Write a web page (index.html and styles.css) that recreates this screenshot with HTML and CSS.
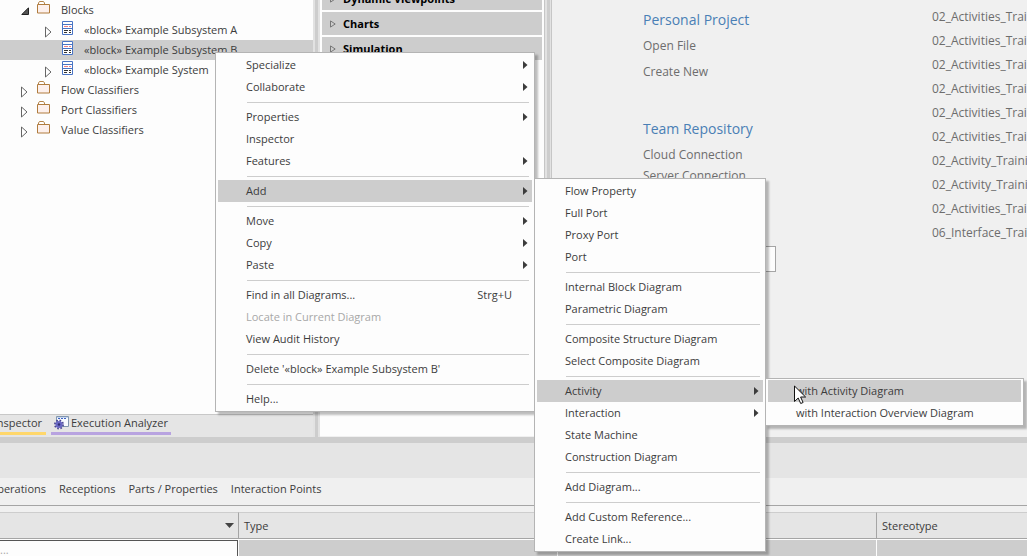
FILE: index.html
```html
<!DOCTYPE html>
<html lang="en">
<head>
<meta charset="utf-8">
<title>Project Browser</title>
<link rel="stylesheet" href="styles.css">
</head>
<body>
<svg class="defs" aria-hidden="true">
  <symbol id="folder" viewBox="0 0 14 13"><path d="M1.500 3V2l1-1.500h4l1 1.500v1" fill="#fff" stroke="#b5854b"/><path d="M.5 3.500h12v8.500H.5z" fill="#fdf0ec" stroke="#b07c3e"/></symbol>
  <symbol id="block" viewBox="0 0 12 15"><path d="M.5.5h10v13H.5z" fill="#fff" stroke="#4a74c4"/><path d="M0 3.500h11M0 7.500h11" stroke="#4a74c4"/><path d="M2 5.500h4M7 5.500h2" stroke="#ea7f86"/><path d="M2 9.500h4M7 9.500h2M2 11.500h3M7 11.500h2" stroke="#333"/></symbol>
  <symbol id="closed" viewBox="0 0 7 12"><path d="M.5 1v10L6 6z" fill="#fff" stroke="#666"/></symbol>
  <symbol id="open" viewBox="0 0 8 8"><path d="M7.500.8v6.700H.8z" fill="#555" stroke="#222"/></symbol>
  <symbol id="tri" viewBox="0 0 6 8"><path d="M.5.9v6.200L5.200 4z" fill="none" stroke="#777"/></symbol>
  <symbol id="sub" viewBox="0 0 5 8"><path d="M0 0l4.500 4L0 8z" fill="#3c3c3c"/></symbol>
</svg>
<div class="app">
  <main class="workspace">
    <section class="browser">
      <ul class="tree">
        <li><button class="node"><span class="twist"><svg class="i-open"><use href="#open"/></svg></span><span class="pic"><svg class="i-folder"><use href="#folder"/></svg></span>Blocks</button></li>
        <li><button class="node child"><span class="twist"><svg class="i-closed"><use href="#closed"/></svg></span><span class="pic"><svg class="i-block"><use href="#block"/></svg></span>«block» Example Subsystem A</button></li>
        <li><button class="node child selected"><span class="twist"></span><span class="pic"><svg class="i-block"><use href="#block"/></svg></span>«block» Example Subsystem B</button></li>
        <li><button class="node child"><span class="twist"><svg class="i-closed"><use href="#closed"/></svg></span><span class="pic"><svg class="i-block"><use href="#block"/></svg></span>«block» Example System</button></li>
        <li><button class="node"><span class="twist"><svg class="i-closed"><use href="#closed"/></svg></span><span class="pic"><svg class="i-folder"><use href="#folder"/></svg></span>Flow Classifiers</button></li>
        <li><button class="node"><span class="twist"><svg class="i-closed"><use href="#closed"/></svg></span><span class="pic"><svg class="i-folder"><use href="#folder"/></svg></span>Port Classifiers</button></li>
        <li><button class="node"><span class="twist"><svg class="i-closed"><use href="#closed"/></svg></span><span class="pic"><svg class="i-folder"><use href="#folder"/></svg></span>Value Classifiers</button></li>
      </ul>
      <div class="dock">
        <button class="dock-tab inspector"><span>Inspector</span></button>
        <button class="dock-tab analyzer">
          <svg class="i-gear" viewBox="0 0 16 14"><path d="M2.500.5h12v10h-12z" fill="#f8fbff" stroke="#8296ae"/><path d="M3 1.500h11" stroke="#c5d6ee"/><path d="M4 2.500h9" stroke="#3f62c4" stroke-dasharray="2 1"/><circle cx="5" cy="8.500" r="4" fill="none" stroke="#4a4690" stroke-width="2" stroke-dasharray="1.600 1.540"/><circle cx="5" cy="8.500" r="3.500" fill="#6a68c4"/><circle cx="5" cy="8.500" r="1.200" fill="#302f73"/></svg>
          <span>Execution Analyzer</span></button>
      </div>
    </section>
    <div class="splitter left"></div>
    <section class="toolbox">
      <button class="group"><svg class="i-tri"><use href="#tri"/></svg>Dynamic Viewpoints</button>
      <button class="group"><svg class="i-tri"><use href="#tri"/></svg>Charts</button>
      <button class="group"><svg class="i-tri"><use href="#tri"/></svg>Simulation</button>
    </section>
    <div class="splitter right"></div>
    <section class="start">
      <div class="start-links">
        <h2>Personal Project</h2>
        <a href="#">Open File</a>
        <a href="#">Create New</a>
        <h2>Team Repository</h2>
        <a href="#" class="tight">Cloud Connection</a>
        <a href="#" class="tight">Server Connection</a>
        <input class="search" type="text" aria-label="Search">
      </div>
      <div class="recent">
        <a href="#">02_Activities_Training</a>
        <a href="#">02_Activities_Training</a>
        <a href="#">02_Activities_Training</a>
        <a href="#">02_Activities_Training</a>
        <a href="#">02_Activities_Training</a>
        <a href="#">02_Activities_Training</a>
        <a href="#">02_Activity_Training</a>
        <a href="#">02_Activity_Training</a>
        <a href="#">02_Activities_Training</a>
        <a href="#">06_Interface_Training</a>
      </div>
    </section>
  </main>
  <section class="features">
    <div class="caption"></div>
    <nav class="tabs">
      <button class="cut"><span>Operations</span></button>
      <button>Receptions</button>
      <button>Parts / Properties</button>
      <button>Interaction Points</button>
    </nav>
    <table class="grid">
      <colgroup><col class="c-name"><col class="c-type"><col class="c-mid"><col></colgroup>
      <thead><tr><th class="sorted"><svg class="i-down" viewBox="0 0 9 5"><path d="M0 0h9L4.500 5z" fill="#444"/></svg></th><th>Type</th><th></th><th>Stereotype</th></tr></thead>
      <tbody><tr><td class="edit"><input type="text" placeholder="..." aria-label="New part name"></td><td></td><td></td><td></td></tr></tbody>
    </table>
  </section>
</div>

<div class="menu context" role="menu">
  <button>Specialize<svg><use href="#sub"/></svg></button>
  <button>Collaborate<svg><use href="#sub"/></svg></button>
  <hr>
  <button>Properties<svg><use href="#sub"/></svg></button>
  <button>Inspector</button>
  <button>Features<svg><use href="#sub"/></svg></button>
  <hr>
  <button class="active">Add<svg><use href="#sub"/></svg></button>
  <hr>
  <button>Move<svg><use href="#sub"/></svg></button>
  <button>Copy<svg><use href="#sub"/></svg></button>
  <button>Paste<svg><use href="#sub"/></svg></button>
  <hr>
  <button>Find in all Diagrams...<kbd>Strg+U</kbd></button>
  <button disabled>Locate in Current Diagram</button>
  <button>View Audit History</button>
  <hr>
  <button>Delete '«block» Example Subsystem B'</button>
  <hr>
  <button>Help...</button>
</div>
<div class="menu add" role="menu">
  <button>Flow Property</button>
  <button>Full Port</button>
  <button>Proxy Port</button>
  <button>Port</button>
  <hr>
  <button>Internal Block Diagram</button>
  <button>Parametric Diagram</button>
  <hr>
  <button>Composite Structure Diagram</button>
  <button>Select Composite Diagram</button>
  <hr>
  <button class="active">Activity<svg><use href="#sub"/></svg></button>
  <button>Interaction<svg><use href="#sub"/></svg></button>
  <button>State Machine</button>
  <button>Construction Diagram</button>
  <hr>
  <button>Add Diagram...</button>
  <hr>
  <button>Add Custom Reference...</button>
  <button>Create Link...</button>
</div>
<div class="menu activity" role="menu">
  <button class="active">with Activity Diagram</button>
  <button>with Interaction Overview Diagram</button>
</div>
<svg class="pointer" viewBox="0 0 12 20"><path d="M.5 1v15.500l3.700-3.500 2.500 5.500 2.400-1-2.500-5.500h5z" fill="#fff" stroke="#111"/></svg>
</body>
</html>
```
FILE: styles.css
```css
* { box-sizing: border-box; }
body {
  margin: 0;
  overflow: hidden;
  font: 11px/20px "Open Sans", "Noto Sans", sans-serif;
  color: #3c3c3c;
  background: #f0f0f0;
}
button, input, kbd { font: inherit; color: inherit; }
button {
  border: 0;
  padding: 0;
  background: none;
  text-align: left;
  white-space: nowrap;
}
a { color: inherit; text-decoration: none; }
svg { display: block; flex: none; }
.defs { position: absolute; width: 0; height: 0; }
.app { display: flex; flex-direction: column; height: 100vh; }
.workspace { flex: 1; display: flex; min-height: 0; }

.browser {
  display: flex;
  flex-direction: column;
  width: 313px;
  flex: none;
  background: #fdfdfd;
}
.tree { flex: 1; margin: 0; padding: 0; list-style: none; }
.node {
  display: flex;
  width: 100%;
  height: 20px;
  padding-left: 20px;
}
.node.child { padding-left: 44px; }
.node.selected { background: #cdcdcd; }
.twist { width: 17px; padding: 6px 0 0 1px; }
.pic { width: 24px; padding-top: 1px; }
.child .pic { width: 23px; padding-left: 1px; }
.i-open { width: 8px; height: 8px; margin-top: 1px; }
.i-closed { width: 7px; height: 12px; }
.i-folder { width: 14px; height: 13px; }
.i-block { width: 12px; height: 15px; }
.i-tri { width: 6px; height: 8px; }
.i-gear { width: 16px; height: 14px; }

.dock {
  display: flex;
  gap: 5px;
  height: 23px;
  border-top: 1px solid #c8c8c8;
  background: #e5e5e5;
}
.dock-tab {
  display: flex;
  align-items: center;
  height: 20px;
  padding-bottom: 1px;
  line-height: 16px;
  border-bottom: 3px solid;
}
.inspector {
  width: 46px;
  justify-content: flex-end;
  padding-right: 4px;
  overflow: hidden;
  border-color: #ffd76b;
}
.analyzer { gap: 1px; padding-right: 3px; padding-left: 3px; border-color: #b8a3e0; }

.splitter { flex: none; background: #cdcdcd; }
.splitter.left {
  width: 7px;
  border: solid #e2e2e2;
  border-width: 0 2px;
}
.splitter.right {
  width: 8px;
  border: solid #c6c6c6;
  border-width: 0 1px;
  background: linear-gradient(90deg, #e2e2e2 2px, #cdcdcd 2px, #cdcdcd 5px, #e2e2e2 5px);
}

.toolbox {
  display: flex;
  flex-direction: column;
  gap: 2px;
  width: 224px;
  flex: none;
  padding: 0 2px;
  margin-bottom: 1px;
  background: #fdfdfd;
}
.group {
  display: flex;
  align-items: center;
  gap: 7px;
  height: 23px;
  padding-left: 8px;
  background: #cdcdcd;
  color: #000;
  font-weight: 700;
}
.group:first-child { margin-top: -13px; }

.start { flex: 1; display: flex; min-width: 0; padding-left: 91px; overflow: hidden; color: #6d6d6d; font-size: 12px; }
.start-links { display: flex; flex-direction: column; width: 289px; flex: none; }
.start h2 {
  margin: 0;
  padding-top: 8px;
  color: #4a7fb5;
  font-size: 14px;
  line-height: 24px;
  font-weight: 400;
}
.start-links a { line-height: 26px; }
.start-links h2 + a { margin-top: 1px; }
.start-links a + h2 { padding-top: 32px; }
.start-links .tight { line-height: 21px; }
.start-links h2 + .tight { margin-top: 3px; }
.search {
  width: 133px;
  height: 26px;
  margin-top: 60px;
  border: 1px solid #a5a5a5;
  background: #fdfdfd;
}
.recent { display: flex; flex-direction: column; padding-top: 5px; line-height: 24px; white-space: nowrap; }

.features { border-top: 6px solid #cdcdcd; }
.caption { height: 35px; background: #e5e5e5; }
.tabs {
  display: flex;
  gap: 13px;
  height: 28px;
  padding-bottom: 6px;
  border-bottom: 1px solid #a5a5a5;
}
.cut {
  display: flex;
  align-items: center;
  justify-content: flex-end;
  width: 46px;
  overflow: hidden;
}
.grid {
  width: 100%;
  margin-top: 6px;
  table-layout: fixed;
  border-collapse: separate;
  border-spacing: 0;
}
.c-name { width: 239px; }
.c-type { width: 319px; }
.c-mid { width: 319px; }
.grid th {
  height: 27px;
  padding: 0 0 0 5px;
  border: solid #a5a5a5;
  border-width: 1px 1px 1px 0;
  border-top-color: #cdcdcd;
  background: #e5e5e5;
  font-weight: 400;
  text-align: left;
}
.grid th:last-child, .grid td:last-child { border-right: 0; }
.sorted .i-down { width: 9px; height: 5px; margin: 0 4px 0 auto; }
.grid td {
  height: 17px;
  padding: 0;
  border-top: 1px solid #fdfdfd;
  border-right: 1px solid #fdfdfd;
  background: #cdcdcd;
}
.edit input {
  display: block;
  width: 100%;
  height: 16px;
  padding: 2px 0 0;
  border: solid #555;
  border-width: 1px 1px 0 0;
  background: #fdfdfd;
}
.edit input::placeholder { color: #a8a8a8; }

.menu {
  position: absolute;
  display: flex;
  flex-direction: column;
  padding: 1px 2px;
  border: 1px solid #b4b4b4;
  background: #fdfdfd;
  box-shadow: 3px 3px 2px rgba(0, 0, 0, .25);
}
.menu button {
  display: flex;
  align-items: center;
  height: 22px;
  padding: 0 4px 0 28px;
}
.menu button:disabled { color: #a8a8a8; }
.menu .active { background: #cdcdcd; }
.menu svg { width: 5px; height: 8px; margin-left: auto; }
.menu kbd { margin: 0 16px 0 auto; }
.menu hr {
  width: auto;
  margin: 4px 3px 3px 29px;
  border: 0;
  border-top: 1px solid #cdcdcd;
}
.context { left: 215px; top: 52px; width: 320px; }
.add { left: 534px; top: 178px; width: 232px; }
.activity { left: 765px; top: 378px; width: 259px; }
.pointer { position: absolute; left: 794px; top: 385px; width: 12px; height: 20px; }
```
